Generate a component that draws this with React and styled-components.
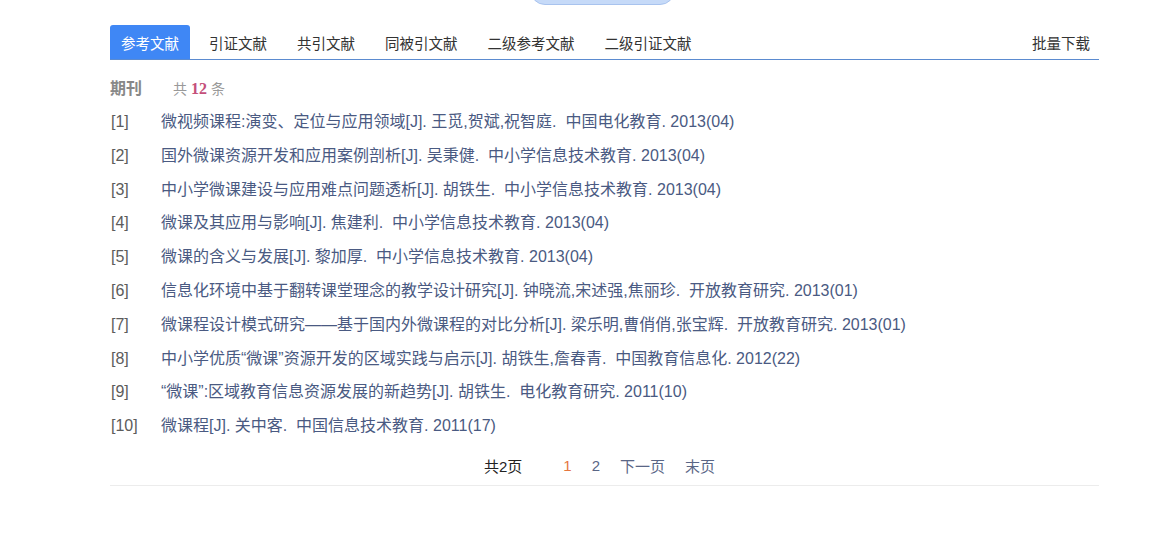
import styled, { createGlobalStyle } from "styled-components";

const GlobalStyle = createGlobalStyle`
  body {
    margin: 0;
    background: #fff;
    font-family: "Liberation Sans", Arial, "Noto Sans CJK SC", sans-serif;
  }
`;

const Page = styled.div`
  width: 989px;
  margin: 0 0 0 110px;
`;

const TopCap = styled.div`
  height: 5px;
  overflow: hidden;
  display: flex;
  justify-content: center;
  align-items: flex-end;
  padding-right: 4px;
`;

const Pill = styled.div`
  width: 145px;
  height: 30px;
  flex-shrink: 0;
  background: #c6daf8;
  border: 1px solid #a8c3ee;
  border-radius: 15px;
  box-sizing: border-box;
`;

const TabBar = styled.div`
  margin-top: 20px;
  display: flex;
  align-items: stretch;
  gap: 8px;
  border-bottom: 1px solid #5b8bd0;
  height: 34px;
`;

const Tab = styled.div`
  padding: 0 11px;
  display: flex;
  align-items: center;
  font-size: 14.5px;
  color: ${(p) => (p.$active ? "#fff" : "#333")};
  background: ${(p) => (p.$active ? "#3f87f5" : "transparent")};
  border-radius: ${(p) => (p.$active ? "3px 3px 0 0" : "0")};
  cursor: pointer;
`;

const Download = styled(Tab)`
  margin-left: auto;
  padding-right: 9px;
`;

const Heading = styled.div`
  display: flex;
  align-items: baseline;
  height: 26px;
  margin-top: 13px;
  padding-top: 2px;
`;

const Category = styled.span`
  font-family: "Noto Sans CJK SC", sans-serif;
  font-weight: bold;
  font-size: 16px;
  color: #888;
  width: 63px;
`;

const Count = styled.span`
  font-family: "Noto Sans CJK SC", sans-serif;
  font-size: 14px;
  color: #999;
  b {
    font-family: "Liberation Serif", serif;
    color: #c4507a;
    font-size: 16px;
    margin: 0 4px;
  }
`;

const List = styled.ol`
  list-style: none;
  margin: 4px 0 0;
  padding: 0;
`;

const Item = styled.li`
  display: flex;
  align-items: baseline;
  height: 33.8px;
  line-height: 33.8px;
  font-size: 16px;
`;

const Index = styled.span`
  width: 50px;
  color: #5c5c5c;
  padding-left: 1px;
`;

const Ref = styled.a`
  color: #4a5a82;
  text-decoration: none;
  white-space: pre;
`;

const Pager = styled.div`
  display: flex;
  justify-content: center;
  align-items: center;
  height: 38px;
  margin-top: 4px;
  font-size: 15px;
  border-bottom: 1px solid #ececec;
  padding-right: 10px;
`;

const Total = styled.span`
  color: #222;
  margin-right: 41px;
`;

const PageLink = styled.a`
  color: ${(p) => (p.$current ? "#e5763f" : "#5a6686")};
  margin-right: ${(p) => (p.$last ? "0" : "20px")};
  text-decoration: none;
`;

const tabs = ["参考文献", "引证文献", "共引文献", "同被引文献", "二级参考文献", "二级引证文献"];

const refs = [
  "微视频课程:演变、定位与应用领域[J]. 王觅,贺斌,祝智庭.  中国电化教育. 2013(04)",
  "国外微课资源开发和应用案例剖析[J]. 吴秉健.  中小学信息技术教育. 2013(04)",
  "中小学微课建设与应用难点问题透析[J]. 胡铁生.  中小学信息技术教育. 2013(04)",
  "微课及其应用与影响[J]. 焦建利.  中小学信息技术教育. 2013(04)",
  "微课的含义与发展[J]. 黎加厚.  中小学信息技术教育. 2013(04)",
  "信息化环境中基于翻转课堂理念的教学设计研究[J]. 钟晓流,宋述强,焦丽珍.  开放教育研究. 2013(01)",
  "微课程设计模式研究——基于国内外微课程的对比分析[J]. 梁乐明,曹俏俏,张宝辉.  开放教育研究. 2013(01)",
  "中小学优质“微课”资源开发的区域实践与启示[J]. 胡铁生,詹春青.  中国教育信息化. 2012(22)",
  "“微课”:区域教育信息资源发展的新趋势[J]. 胡铁生.  电化教育研究. 2011(10)",
  "微课程[J]. 关中客.  中国信息技术教育. 2011(17)",
];

export default function App() {
  return (
    <>
      <GlobalStyle />
      <Page>
        <TopCap>
          <Pill />
        </TopCap>
        <TabBar>
          {tabs.map((t, i) => (
            <Tab key={t} $active={i === 0}>
              {t}
            </Tab>
          ))}
          <Download>批量下载</Download>
        </TabBar>
        <Heading>
          <Category>期刊</Category>
          <Count>
            共<b>12</b>条
          </Count>
        </Heading>
        <List>
          {refs.map((r, i) => (
            <Item key={i}>
              <Index>[{i + 1}]</Index>
              <Ref href="#">{r}</Ref>
            </Item>
          ))}
        </List>
        <Pager>
          <Total>共2页</Total>
          <PageLink $current>1</PageLink>
          <PageLink>2</PageLink>
          <PageLink>下一页</PageLink>
          <PageLink $last>末页</PageLink>
        </Pager>
      </Page>
    </>
  );
}
